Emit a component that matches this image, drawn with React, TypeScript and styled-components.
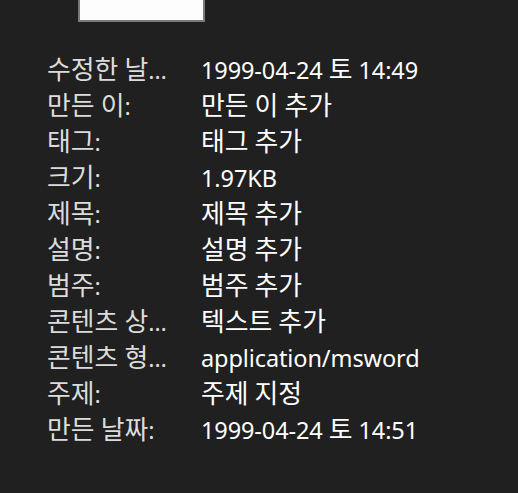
import React from "react";
import styled, { createGlobalStyle } from "styled-components";

const Global = createGlobalStyle`
  html, body { margin: 0; padding: 0; background: #202020; }
  body { font-family: "Noto Sans", "Noto Sans CJK KR", sans-serif; }
`;

const Page = styled.div`
  width: 518px;
  height: 493px;
  background: #202020;
  overflow: hidden;
`;

const Thumb = styled.div`
  margin-left: 78px;
  width: 123px;
  height: 20px;
  background: #fdfdfd;
  border: 2px solid #7a7a7a;
  border-top: none;
`;

const List = styled.div`
  margin-top: 30px;
  padding-left: 47px;
  display: grid;
  grid-template-columns: 154px auto;
`;

const Label = styled.div`
  color: #dcdcdc;
  font-size: 23.5px;
  line-height: 36px;
  height: 36px;
  max-width: 122px;
  white-space: nowrap;
  overflow: hidden;
  text-overflow: ellipsis;
`;

const Value = styled.div`
  color: #ffffff;
  font-size: 23.5px;
  line-height: 36px;
  height: 36px;
  white-space: nowrap;
  letter-spacing: -0.1px;
`;

const Hangul = styled.span`
  font-family: "Noto Sans CJK KR", sans-serif;
  font-size: 1.1em;
  line-height: 1;
  letter-spacing: 0;
`;

function Text({ children }: { children: string }) {
  const parts = children.split(/([\uAC00-\uD7A3]+)/);
  return (
    <>
      {parts.map((p, i) =>
        /[\uAC00-\uD7A3]/.test(p) ? <Hangul key={i}>{p}</Hangul> : <React.Fragment key={i}>{p}</React.Fragment>
      )}
    </>
  );
}

const rows: [string, string][] = [
  ["수정한 날짜:", "1999-04-24 토 14:49"],
  ["만든 이:", "만든 이 추가"],
  ["태그:", "태그 추가"],
  ["크기:", "1.97KB"],
  ["제목:", "제목 추가"],
  ["설명:", "설명 추가"],
  ["범주:", "범주 추가"],
  ["콘텐츠 상태:", "텍스트 추가"],
  ["콘텐츠 형식:", "application/msword"],
  ["주제:", "주제 지정"],
  ["만든 날짜:", "1999-04-24 토 14:51"],
];

export default function App() {
  return (
    <Page>
      <Global />
      <Thumb />
      <List>
        {rows.map(([l, v]) => (
          <React.Fragment key={l}>
            <Label>
              <Text>{l}</Text>
            </Label>
            <Value>
              <Text>{v}</Text>
            </Value>
          </React.Fragment>
        ))}
      </List>
    </Page>
  );
}
